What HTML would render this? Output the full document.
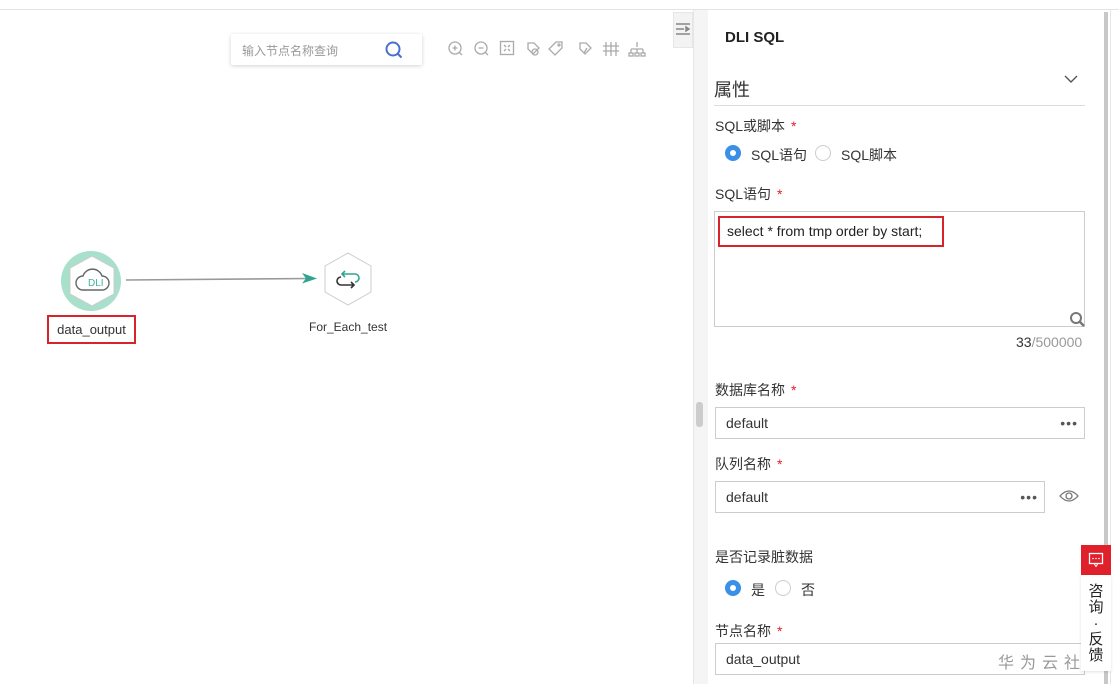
<!DOCTYPE html>
<html><head><meta charset="utf-8"><style>
*{box-sizing:border-box;margin:0;padding:0}
body{width:1119px;height:684px;overflow:hidden;background:#fff;font-family:"Liberation Sans","Noto Sans CJK SC",sans-serif;color:#333;position:relative}
.a{position:absolute}
.lbl{font-size:14px;color:#333}
.req{color:#e0202a;margin-left:6px}
.inp{border:1px solid #ccc;height:32px;font-size:14px;padding-left:10px;line-height:30px;background:#fff}
.dots{position:absolute;right:6px;top:0;font-size:14px;letter-spacing:1px;color:#555}
</style></head><body>
<div class="a" style="left:0;top:9px;width:1119px;height:1px;background:#e3e3e3"></div>
<div class="a" style="left:231px;top:34px;width:191px;height:31px;border-radius:2px;box-shadow:0 1px 4px rgba(0,0,0,.18);background:#fff"></div>
<div class="a" style="left:242px;top:42px;font-size:12px;color:#999">输入节点名称查询</div>
<svg class="a" style="left:384px;top:40px" width="20" height="20"><circle cx="9" cy="9" r="6.5" fill="none" stroke="#4a6fd0" stroke-width="2"/><path d="M13.5 13.5l4 4" stroke="#4a6fd0" stroke-width="2"/></svg>
<svg class="a" style="left:446px;top:40px" width="204" height="18" fill="none" stroke="#aaa" stroke-width="1.3">
<circle cx="9" cy="8" r="6"/><path d="M6.5 8h5M9 5.5v5M13 12l3 3"/>
<circle cx="35" cy="8" r="6"/><path d="M32.5 8h5M39 12l3 3"/>
<rect x="54.5" y="1.5" width="13" height="13"/><path d="M58 5l2 2M64 5l-2 2M58 11l2-2M64 11l-2-2"/>
<path d="M82 3h6l5 5-6 6-5-5z"/><circle cx="89" cy="12" r="3"/>
<path d="M110 2h6v6l-7 7-6-6z"/><circle cx="113" cy="5" r="1"/>
<path d="M134 3h6l5 5-6 6-5-5z"/><path d="M138 13l3-5"/>
<path d="M160 2v14M165 2v14M170 2v14M157 6h16M157 11h16"/>
<path d="M191 2v5M185 9h12M185 9v4M191 9v4M197 9v4"/><rect x="183" y="13" width="4" height="3"/><rect x="189" y="13" width="4" height="3"/><rect x="195" y="13" width="4" height="3"/>
</svg>
<div class="a" style="left:673px;top:12px;width:20px;height:36px;background:#f3f3f3;border:1px solid #e6e6e6"></div>
<svg class="a" style="left:676px;top:22px" width="16" height="14" stroke="#888" stroke-width="1.5"><path d="M0 2h14M0 7h8M0 12h14"/><path d="M10 5l3 2-3 2z" fill="#888"/></svg>
<div class="a" style="left:693px;top:10px;width:15px;height:674px;background:#f5f5f5;border-left:1px solid #e6e6e6"></div>
<div class="a" style="left:696px;top:402px;width:7px;height:25px;background:#ccc;border-radius:3px"></div>
<div class="a" style="left:1104px;top:12px;width:4px;height:672px;background:#c8c8c8"></div>
<div class="a" style="left:1110px;top:10px;width:1px;height:674px;background:#e6e6e6"></div>
<div class="a" style="left:61px;top:251px;width:60px;height:60px;border-radius:50%;background:#a8e0cc"></div>
<svg class="a" style="left:66px;top:254px" width="52" height="54"><polygon points="26,2 48,14 48,40 26,52 4,40 4,14" fill="#fff" stroke="#ccc"/><path d="M17 36a7 7 0 0 1 0-14a10 10 0 0 1 19 0a7 7 0 0 1 0 14z" fill="none" stroke="#666" stroke-width="1.4"/><text x="22" y="32" font-size="10" fill="#3bb79c" font-family="Liberation Sans">DLI</text></svg>
<div class="a" style="left:47px;top:315px;width:89px;height:29px;border:2px solid #d6242a;font-size:13px;text-align:center;line-height:25px">data_output</div>
<svg class="a" style="left:125px;top:270px" width="195" height="16"><path d="M1 10L185 8.5" stroke="#999" stroke-width="1.6"/><path d="M177 3l15 5.5-15 5 4-5z" fill="#2fa58f"/></svg>
<svg class="a" style="left:322px;top:252px" width="52" height="54"><polygon points="26,1 49,14 49,40 26,53 3,40 3,14" fill="#fff" stroke="#ccc"/><path d="M20 22h13a4 4 0 0 1 0 8" fill="none" stroke="#2fa58f" stroke-width="1.6"/><path d="M23 19l-3 3 3 3" fill="none" stroke="#2fa58f" stroke-width="1.6"/><path d="M32 33H19a4 4 0 0 1 0-8" fill="none" stroke="#333" stroke-width="1.6"/><path d="M29 30l3 3-3 3" fill="none" stroke="#333" stroke-width="1.6"/></svg>
<div class="a" style="left:309px;top:320px;font-size:12px">For_Each_test</div>
<div class="a" style="left:725px;top:29px;font-size:15px;font-weight:bold;color:#222">DLI SQL</div>
<div class="a" style="left:714px;top:76px;font-size:18px;color:#333">属性</div>
<svg class="a" style="left:1064px;top:74px" width="14" height="10"><path d="M1 2l6 6 6-6" fill="none" stroke="#555" stroke-width="1.4"/></svg>
<div class="a" style="left:714px;top:105px;width:371px;height:1px;background:#ddd"></div>
<div class="a lbl" style="left:715px;top:116px">SQL或脚本<span class="req">*</span></div>
<div class="a" style="left:725px;top:145px;width:16px;height:16px;border-radius:50%;background:#3a8fe8"></div>
<div class="a" style="left:730px;top:150px;width:6px;height:6px;border-radius:50%;background:#fff"></div>
<div class="a lbl" style="left:751px;top:145px">SQL语句</div>
<div class="a" style="left:815px;top:145px;width:16px;height:16px;border-radius:50%;border:1px solid #ccc"></div>
<div class="a lbl" style="left:841px;top:145px">SQL脚本</div>
<div class="a lbl" style="left:715px;top:184px">SQL语句<span class="req">*</span></div>
<div class="a" style="left:714px;top:211px;width:371px;height:116px;border:1px solid #ccc"></div>
<div class="a" style="left:718px;top:216px;width:226px;height:31px;border:2px solid #d6242a;font-size:14px;line-height:27px;padding-left:7px;color:#222">select * from tmp order by start;</div>
<svg class="a" style="left:1069px;top:311px" width="16" height="16"><circle cx="7" cy="7" r="5" fill="none" stroke="#777" stroke-width="2"/><path d="M11 11l4 4" stroke="#777" stroke-width="2.5"/></svg>
<div class="a" style="left:1016px;top:334px;font-size:14px;color:#333">33<span style="color:#999">/500000</span></div>
<div class="a lbl" style="left:715px;top:380px">数据库名称<span class="req">*</span></div>
<div class="a inp" style="left:715px;top:407px;width:370px">default<span class="dots">•••</span></div>
<div class="a lbl" style="left:715px;top:454px">队列名称<span class="req">*</span></div>
<div class="a inp" style="left:715px;top:481px;width:330px">default<span class="dots">•••</span></div>
<svg class="a" style="left:1059px;top:488px" width="20" height="16"><path d="M1 8q9-10 18 0q-9 10-18 0z" fill="none" stroke="#777" stroke-width="1.3"/><circle cx="10" cy="8" r="3" fill="none" stroke="#777" stroke-width="1.3"/></svg>
<div class="a lbl" style="left:715px;top:547px">是否记录脏数据</div>
<div class="a" style="left:725px;top:580px;width:16px;height:16px;border-radius:50%;background:#3a8fe8"></div>
<div class="a" style="left:730px;top:585px;width:6px;height:6px;border-radius:50%;background:#fff"></div>
<div class="a lbl" style="left:751px;top:580px">是</div>
<div class="a" style="left:775px;top:580px;width:16px;height:16px;border-radius:50%;border:1px solid #ccc"></div>
<div class="a lbl" style="left:801px;top:580px">否</div>
<div class="a lbl" style="left:715px;top:621px">节点名称<span class="req">*</span></div>
<div class="a inp" style="left:715px;top:643px;width:370px">data_output</div>
<div class="a" style="left:998px;top:649px;font-size:16px;color:#999;letter-spacing:6px">华为云社</div>
<div class="a" style="left:1081px;top:545px;width:30px;height:30px;background:#e0202a"></div>
<svg class="a" style="left:1088px;top:552px" width="16" height="16"><rect x="1.5" y="1.5" width="13" height="10" fill="none" stroke="#fff" stroke-width="1.3"/><path d="M6 11.5l2 3 2-3" fill="none" stroke="#fff"/><circle cx="5" cy="6.5" r=".8" fill="#fff"/><circle cx="8" cy="6.5" r=".8" fill="#fff"/><circle cx="11" cy="6.5" r=".8" fill="#fff"/></svg>
<div class="a" style="left:1081px;top:575px;width:30px;height:96px;background:#fff;box-shadow:0 1px 3px rgba(0,0,0,.12);font-size:15px;line-height:16px;text-align:center;padding-top:9px;color:#222">咨<br>询<br>·<br>反<br>馈</div>
</body></html>
